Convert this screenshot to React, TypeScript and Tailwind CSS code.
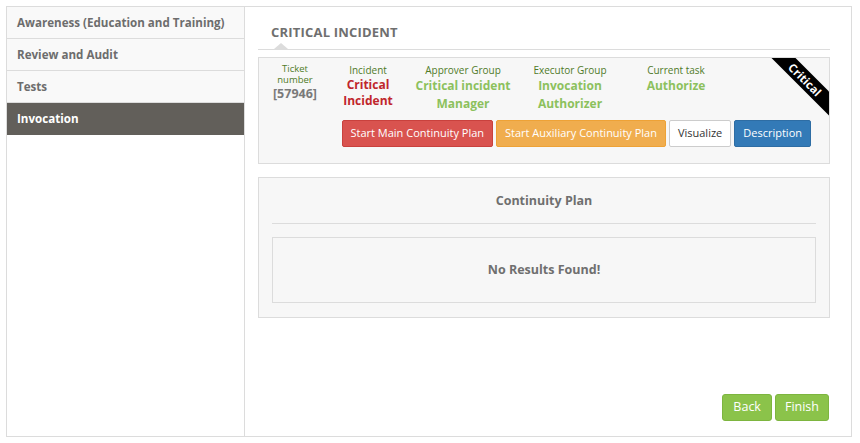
import React from 'react'

const font = { fontFamily: '"Open Sans", "Liberation Sans", sans-serif' }

function Field({ label, value, color, width }: { label: string; value: React.ReactNode; color: string; width: string }) {
  return (
    <div className={`flex flex-col items-center text-center ${width}`}>
      <span className="text-[10px] leading-[11px] mb-[1px] text-[#4f7a28]">{label}</span>
      <span className={`text-[12px] font-bold ${color}`}>{value}</span>
    </div>
  )
}

export default function App() {
  return (
    <div className="w-[860px] h-[443px] bg-white pt-[6px] pl-[6px]" style={font}>
      <div className="flex w-[846px] h-[431px] border border-[#dcdcdc]">
        {/* Sidebar */}
        <div className="w-[238px] border-r border-[#dcdcdc]">
          {['Awareness (Education and Training)', 'Review and Audit', 'Tests'].map((t) => (
            <div key={t} className="h-[32px] flex items-center px-[10px] border-b border-[#dcdcdc] bg-[#f9f9f9] text-[11.6px] font-bold text-[#6d6d6d]">
              {t}
            </div>
          ))}
          <div className="h-[32px] flex items-center px-[10px] bg-[#625f5a] text-[11.6px] font-bold text-white">
            Invocation
          </div>
        </div>

        {/* Main */}
        <div className="flex-1 flex flex-col pl-[13px] pr-[21px]">
          <div className="relative h-[43px] border-b border-[#dcdcdc] flex items-end pb-[7px] pl-[13px]">
            <span className="text-[13px] font-bold text-[#6f6f6f] tracking-[0.2px]">CRITICAL INCIDENT</span>
            <span className="absolute left-[16px] bottom-0 w-0 h-0 border-l-[7px] border-r-[7px] border-b-[6px] border-l-transparent border-r-transparent border-b-[#dcdcdc]" />
          </div>

          {/* Incident card */}
          <div className="relative mt-[7px] h-[107px] bg-[#f7f7f7] border border-[#dcdcdc] overflow-hidden">
            <div className="flex items-start pt-[7px] pl-[4px]">
              <div className="flex flex-col items-center text-center w-[64px] -mt-[2px]">
                <span className="text-[9.5px] leading-[11px] text-[#4f7a28]">Ticket</span>
                <span className="text-[9.5px] leading-[11px] text-[#4f7a28]">number</span>
                <span className="text-[12.5px] font-bold leading-[16px] mt-[1px] text-[#7a7a7a]">[57946]</span>
              </div>
              <div className="w-[11px]" />
              <Field label="Incident" value={<>Critical<br />Incident</>} color="text-[#c0262c] leading-[16px]" width="w-[60px]" />
              <div className="w-[10px]" />
              <Field label="Approver Group" value={<>Critical incident<br />Manager</>} color="text-[#8cc15d] leading-[18px]" width="w-[110px]" />
              <Field label="Executor Group" value={<>Invocation<br />Authorizer</>} color="text-[#8cc15d] leading-[18px]" width="w-[104px]" />
              <Field label="Current task" value="Authorize" color="text-[#8cc15d] leading-[18px]" width="w-[108px]" />
            </div>
            <div className="flex justify-end gap-[3px] pr-[18px] mt-[7px]">
              <button className="h-[27px] px-[8px] rounded-[2px] bg-[#d9534f] border border-[#c9413d] text-white text-[11px]">Start Main Continuity Plan</button>
              <button className="h-[27px] px-[8px] rounded-[2px] bg-[#f0ad4e] border border-[#eea236] text-white text-[11px]">Start Auxiliary Continuity Plan</button>
              <button className="h-[27px] px-[8px] rounded-[2px] bg-white border border-[#cccccc] text-[#333] text-[11px]">Visualize</button>
              <button className="h-[27px] px-[8px] rounded-[2px] bg-[#337ab7] border border-[#2e6da4] text-white text-[11px]">Description</button>
            </div>
            <div className="absolute right-[-22px] top-[13px] w-[92px] h-[17px] bg-black rotate-45 flex items-center justify-center">
              <span className="text-[11.5px] font-bold text-white leading-none">Critical</span>
            </div>
          </div>

          {/* Continuity plan */}
          <div className="mt-[13px] h-[141px] bg-[#f7f7f7] border border-[#dcdcdc] px-[13px]">
            <div className="h-[46px] border-b border-[#dcdcdc] flex items-center justify-center pt-[2px]">
              <span className="text-[12.5px] font-bold text-[#6f6f6f]">Continuity Plan</span>
            </div>
            <div className="mt-[13px] h-[66px] border border-[#dcdcdc] flex items-center justify-center">
              <span className="text-[12.5px] font-bold text-[#6f6f6f]">No Results Found!</span>
            </div>
          </div>

          <div className="flex-1" />
          <div className="flex justify-end gap-[3px] mb-[15px] mr-[1px]">
            <button className="h-[27px] px-[10px] rounded-[3px] bg-[#8bc34a] border border-[#7db53f] text-white text-[12.5px]">Back</button>
            <button className="h-[27px] px-[9px] rounded-[3px] bg-[#8bc34a] border border-[#7db53f] text-white text-[12.5px]">Finish</button>
          </div>
        </div>
      </div>
    </div>
  )
}
